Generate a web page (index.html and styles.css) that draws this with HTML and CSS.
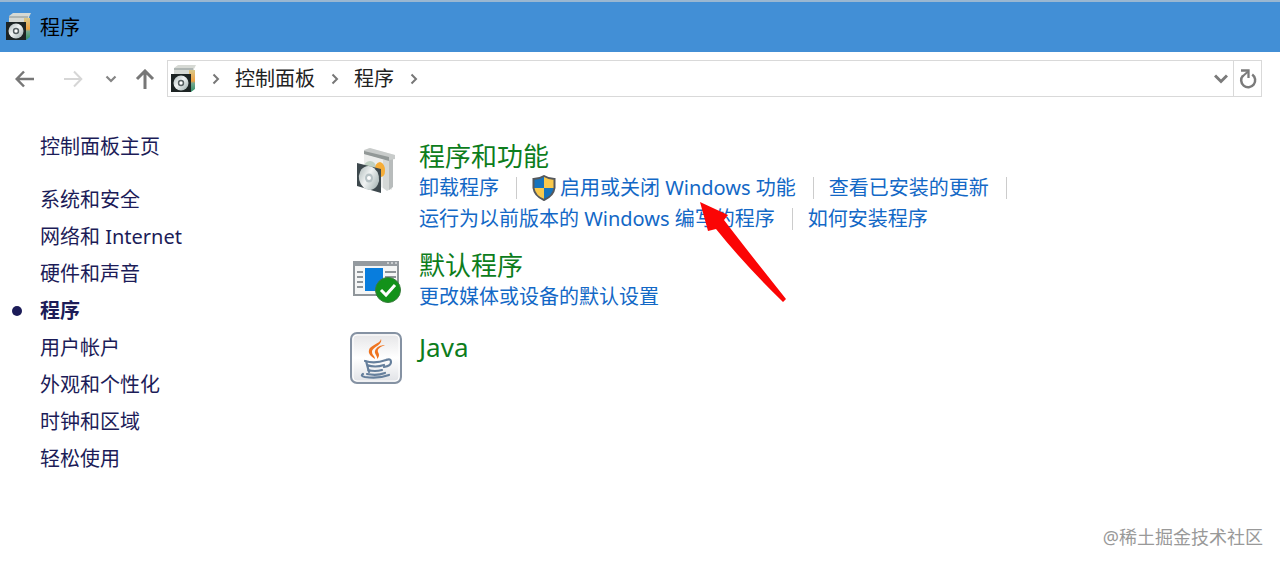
FILE: index.html
```html
<!DOCTYPE html>
<html lang="zh-CN">
<head>
<meta charset="utf-8">
<title>程序</title>
<link rel="stylesheet" href="styles.css">
</head>
<body>
<svg class="defs" aria-hidden="true">
  <defs>
    <linearGradient id="disc" x1="0" y1="0" x2="1" y2="1"><stop offset="0" stop-color="#a9b5b5"/><stop offset=".45" stop-color="#f1f4f4"/><stop offset="1" stop-color="#98a8a8"/></linearGradient>
    <linearGradient id="side" x1="0" y1="0" x2="0" y2="1"><stop offset="0" stop-color="#d8c88a"/><stop offset=".5" stop-color="#f0a040"/><stop offset=".6" stop-color="#78a890"/><stop offset="1" stop-color="#2f8f66"/></linearGradient>
    <linearGradient id="tile" x1="0" y1="0" x2="0" y2="1"><stop offset="0" stop-color="#e4e4e6"/><stop offset=".5" stop-color="#ffffff"/><stop offset="1" stop-color="#dfe1e5"/></linearGradient>
    <symbol id="programs-small" viewBox="0 0 26 28">
      <path d="M3 3 7 0h18l-2 4v20l-4 3H3z" fill="#d6d9d4"/>
      <path d="M18 5h6v19l-4 3h-2z" fill="url(#side)"/>
      <path d="M3 3h19v2H3z" fill="#aeb5b3"/>
      <path d="M0 9h20v18H0z" fill="#1d2424"/>
      <circle cx="10" cy="18" r="7.5" fill="url(#disc)"/>
      <circle cx="10" cy="18" r="3.2" fill="#555e60"/><circle cx="10" cy="18" r="1.7" fill="#fff"/>
    </symbol>
  </defs>
</svg>
<header class="titlebar">
  <svg class="app-icon" aria-hidden="true"><use href="#programs-small"/></svg>
  <h1 class="title">程序</h1>
</header>
<nav class="toolbar" aria-label="导航">
  <button class="nav-btn back" aria-label="后退"><svg width="20" height="18" viewBox="0 0 20 18"><path d="M19 9H2M9 1.5 1.7 9 9 16.500" fill="none" stroke="#777" stroke-width="2.5"/></svg></button>
  <button class="nav-btn forward" aria-label="前进"><svg width="20" height="18" viewBox="0 0 20 18"><path d="M1 9h17M11 1.500 18.300 9 11 16.500" fill="none" stroke="#d6d6d6" stroke-width="2"/></svg></button>
  <button class="nav-btn recent" aria-label="最近位置"><svg width="12" height="8" viewBox="0 0 12 8"><path d="m1.500 1.500 4.500 4.500 4.500-4.500" fill="none" stroke="#858585" stroke-width="2.200"/></svg></button>
  <button class="nav-btn up" aria-label="上移"><svg width="20" height="20" viewBox="0 0 20 20"><path d="M10 20V2M2 10l8-8 8 8" fill="none" stroke="#777" stroke-width="3"/></svg></button>
  <div class="address">
    <svg class="app-icon" aria-hidden="true"><use href="#programs-small"/></svg>
    <svg class="chev" viewBox="0 0 8 12"><path d="m1.500 1.500 4.500 4.500-4.500 4.500"/></svg>
    <a class="crumb" href="#">控制面板</a>
    <svg class="chev" viewBox="0 0 8 12"><path d="m1.500 1.500 4.500 4.500-4.500 4.500"/></svg>
    <a class="crumb" href="#">程序</a>
    <svg class="chev" viewBox="0 0 8 12"><path d="m1.500 1.500 4.500 4.500-4.500 4.500"/></svg>
    <button class="nav-btn expand" aria-label="展开"><svg width="14" height="10" viewBox="0 0 14 10"><path d="m1 1.500 6 6 6-6" fill="none" stroke="#7b7b7b" stroke-width="3"/></svg></button>
    <button class="nav-btn refresh" aria-label="刷新"><svg width="18" height="20" viewBox="0 0 18 20"><path d="M13.200 5.500A7 7 0 1 1 4 6.500" fill="none" stroke="#7b7b7b" stroke-width="2.500"/><path d="M2 1.500h7.500V9" fill="none" stroke="#7b7b7b" stroke-width="2.300"/><path d="m3.500 7.500 5.500-5" stroke="#7b7b7b" stroke-width="2"/></svg></button>
  </div>
</nav>
<div class="content">
  <aside class="sidebar">
    <a class="side-link home" href="#">控制面板主页</a>
    <ul class="side-list">
      <li><a class="side-link" href="#">系统和安全</a></li>
      <li><a class="side-link" href="#">网络和 Internet</a></li>
      <li><a class="side-link" href="#">硬件和声音</a></li>
      <li class="current"><a class="side-link" href="#" aria-current="page">程序</a></li>
      <li><a class="side-link" href="#">用户帐户</a></li>
      <li><a class="side-link" href="#">外观和个性化</a></li>
      <li><a class="side-link" href="#">时钟和区域</a></li>
      <li><a class="side-link" href="#">轻松使用</a></li>
    </ul>
  </aside>
  <main class="main">
    <section class="group">
      <svg class="group-icon" viewBox="0 0 54 54" aria-hidden="true">
        <path d="m15 10 5-3 26 7-3 3v32l-9-2-19-7z" fill="#ecedec"/>
        <path d="m34 19 9-2v30l-5 3-4-3z" fill="#d5d8d7"/>
        <path d="m40 17 4-2v31l-4 3z" fill="#b8bcbc"/>
        <path d="m15 9 6-2 25 7v4l-5 1-26-6z" fill="#c8cbca"/>
        <path d="m15 10 25 6v4l-25-7z" fill="#929897"/>
        <circle cx="21" cy="26" r="6" fill="#bfd0c2"/>
        <path d="M31 21a6 8 0 0 1 5 9q0 6-5 6l-5-8q0-6 5-7z" fill="#f5ad39"/>
        <path d="m8 22 24 6v24L8 45z" fill="#3d484d"/>
        <ellipse cx="20" cy="37" rx="10" ry="12" transform="rotate(-12 20 37)" fill="url(#disc)"/>
        <ellipse cx="20" cy="37" rx="4" ry="4.500" fill="#b7c2c5"/><circle cx="20" cy="37" r="2" fill="#fff"/>
      </svg>
      <div class="group-body">
        <h2 class="group-title"><a href="#">程序和功能</a></h2>
        <ul class="tasks">
          <li><a href="#">卸载程序</a></li>
          <li><a class="shielded" href="#"><svg width="24" height="26" viewBox="0 0 24 26" aria-hidden="true"><path d="M12 1q5 3 10.500 3v9q-1 8-10.500 12Q2.500 21 1.500 13V4Q7 4 12 1z" fill="#f9c94c"/><path d="M12 1v12H1.500V4Q7 4 12 1zM12 13h10.500q-1 8-10.500 12z" fill="#1673bd"/><path d="M12 1q5 3 10.500 3v9q-1 8-10.500 12Q2.500 21 1.500 13V4Q7 4 12 1z" fill="none" stroke="#55585c" stroke-width="2"/></svg>启用或关闭 Windows 功能</a></li>
          <li><a href="#">查看已安装的更新</a></li>
        </ul>
        <ul class="tasks last">
          <li><a href="#">运行为以前版本的 Windows 编写的程序</a></li>
          <li><a href="#">如何安装程序</a></li>
        </ul>
      </div>
      <svg class="pointer" viewBox="0 0 86 100" aria-hidden="true"><path d="M0 0 28 13 24 18Q50 52 86 97L83 100Q44 62 16 27L8 29z" fill="#fb0505"/></svg>
    </section>
    <section class="group">
      <svg class="group-icon" viewBox="0 0 54 54" aria-hidden="true">
        <path d="M5 12h44v33H5z" fill="#f5f6f6" stroke="#90969b" stroke-width="2"/>
        <path d="M4 11h46v5H4z" fill="#949a9f"/><path d="M38 13h2m2 0h2m2 0h2" stroke="#fff" stroke-width="1"/>
        <path d="M8 22h6m-6 5h6m-6 5h6m-6 5h6M36 22h11m-11 5h11m-11 5h11" stroke="#8e9498" stroke-width="2"/>
        <path d="M16 18h18v23H16z" fill="#087ddd"/>
        <circle cx="39" cy="40" r="12.500" fill="#13921a" stroke="#397b3c"/>
        <path d="m32 40 5 5 9-10" fill="none" stroke="#fff" stroke-width="3"/>
      </svg>
      <div class="group-body">
        <h2 class="group-title"><a href="#">默认程序</a></h2>
        <ul class="tasks last"><li><a href="#">更改媒体或设备的默认设置</a></li></ul>
      </div>
    </section>
    <section class="group">
      <svg class="group-icon" viewBox="0 0 54 54" aria-hidden="true">
        <rect x="2" y="1" width="50" height="50" rx="6" fill="url(#tile)" stroke="#8592a3" stroke-width="2"/>
        <rect x="4" y="3" width="46" height="46" rx="4" fill="none" stroke="#fff"/>
        <path d="M32 7c2 6-9 8-9 13 0 3 3 4 3 7-4-3-7-5-6-9 1-5 11-6 12-11zM36 13c-5 2-8 4-7 7 1 2 2 4-1 7 1-3-3-5-2-8 1-4 6-6 10-6z" fill="#ef7420"/>
        <g fill="none" stroke="#657f9c" stroke-width="2.200" stroke-linecap="round"><path d="M16 29q10 3 21-1M18 33q8 3 17 0M19 38q7 2 14 0M17 29l3 11M37 28q5-2 5 2t-7 5M14 42q-3 2 2 3 13 2 24-2M18 42q10 2 18-1"/></g>
      </svg>
      <div class="group-body"><h2 class="group-title"><a href="#">Java</a></h2></div>
    </section>
  </main>
</div>
<footer class="watermark">@稀土掘金技术社区</footer>
</body>
</html>
```

FILE: styles.css
```css
* { box-sizing: border-box; }
body {
  margin: 0;
  min-height: 100vh;
  display: flex;
  flex-direction: column;
  background: #fff;
  color: #222;
  font: 20px/31px "Noto Sans", "Noto Sans CJK SC", sans-serif;
}
a { color: inherit; text-decoration: none; }
ul { margin: 0; padding: 0; list-style: none; }
svg { flex: none; }
.defs { position: absolute; width: 0; height: 0; }
.titlebar {
  display: flex;
  align-items: center;
  gap: 8px;
  height: 52px;
  padding: 0 6px;
  background: #428fd6;
  border-top: 2px solid #9ab7d1;
}
.app-icon { width: 26px; height: 28px; }
.title { margin: 0; font-size: 20px; font-weight: 400; color: #000; }
.toolbar { display: flex; align-items: center; padding: 8px 18px 0 14px; }
.nav-btn {
  display: flex;
  align-items: center;
  justify-content: center;
  flex: none;
  height: 35px;
  padding: 0;
  border: 0;
  background: none;
}
.back { width: 22px; }
.forward { width: 22px; margin-left: 26px; }
.recent { width: 16px; margin-left: 19px; }
.up { width: 22px; margin: 0 11px 0 15px; }
.address {
  display: flex;
  flex: 1;
  align-items: center;
  height: 37px;
  padding-left: 3px;
  border: 1px solid #d9d9d9;
}
.address .app-icon { margin-right: 15px; }
.chev { width: 8px; height: 12px; fill: none; stroke: #777; stroke-width: 2; }
.crumb { margin: 0 16px 0 15px; color: #222; }
.expand { width: 24px; margin-left: auto; }
.refresh { width: 28px; border-left: 1px solid #d9d9d9; }
.content { display: flex; flex: 1; padding-top: 34px; }
.sidebar { flex: none; width: 349px; padding-left: 40px; color: #1c1c58; }
.home { display: block; margin-bottom: 19px; }
.side-list { line-height: 37px; }
.current { position: relative; font-weight: 700; }
.current::before {
  content: "";
  position: absolute;
  left: -28px;
  top: 14px;
  width: 10px;
  height: 10px;
  border-radius: 50%;
  background: #1c1c58;
}
.main { display: flex; flex: 1; flex-direction: column; gap: 16px; padding-top: 10px; }
.group { position: relative; display: flex; gap: 16px; min-height: 66px; }
.group-icon { width: 54px; height: 54px; }
.group-title { margin: 0; color: #0d7d1c; font-size: 26px; font-weight: 400; line-height: 31px; }
.tasks { display: flex; flex-wrap: wrap; color: #1368c6; }
.tasks li { display: flex; align-items: center; }
.tasks li::after { content: ""; width: 1px; height: 22px; margin: 0 15px 0 17px; background: #ccc; }
.tasks.last li:last-child::after { display: none; }
.shielded { display: flex; align-items: center; gap: 4px; }
.pointer { position: absolute; left: 351px; top: 61px; width: 86px; height: 100px; z-index: 1; }
.watermark { padding: 0 17px 12px; color: #999; font-size: 18px; text-align: right; }
```
